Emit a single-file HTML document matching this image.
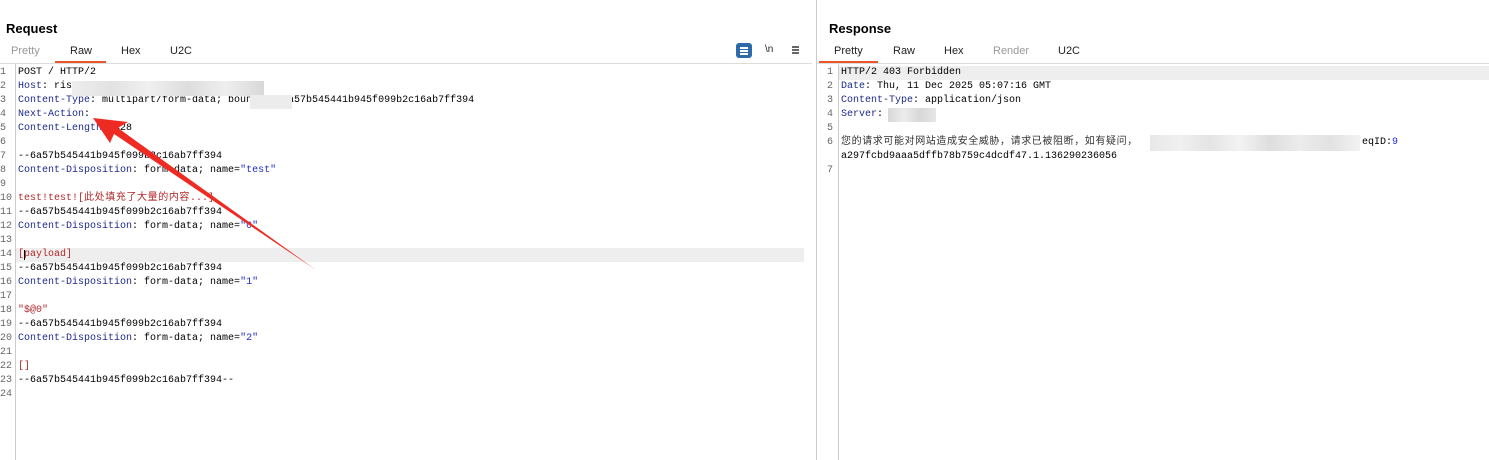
<!DOCTYPE html>
<html><head><meta charset="utf-8"><style>
*{margin:0;padding:0;box-sizing:border-box}
body{width:1489px;height:460px;background:#fff;position:relative;overflow:hidden;font-family:"Liberation Sans",sans-serif}
.title{position:absolute;top:21px;font-weight:bold;font-size:13px;color:#000}
.tab{position:absolute;top:45px;font-size:11px;color:#222}
.tab.dim{color:#999}
.ul{position:absolute;top:61px;height:2px;background:#e8562a}
.hr{position:absolute;top:63px;height:1px;background:#ddd}
.code{position:absolute;top:66px;font-family:"Liberation Mono","Noto Sans CJK SC",monospace;font-size:10px;line-height:14px;white-space:pre;color:#000}
.ln{position:absolute;top:66px;font-family:"Liberation Mono",monospace;font-size:10px;line-height:14px;color:#666;text-align:left;white-space:pre}
.k{color:#1e2a8c}.s{color:#1e2acc}.r{color:#b0282a}
.cj{letter-spacing:0.6px}
.blur{position:absolute;background:#e4e4e4}
</style></head><body>
<div class="title" style="left:6px">Request</div>
<div class="tab dim" style="left:11px">Pretty</div>
<div class="tab" style="left:70px">Raw</div>
<div class="tab" style="left:121px">Hex</div>
<div class="tab" style="left:170px">U2C</div>
<div class="ul" style="left:55px;width:51px"></div>
<div class="hr" style="left:0;width:812px"></div>
<div style="position:absolute;left:736px;top:43px;width:16px;height:15px;background:#2e6aa8;border-radius:3px"></div>
<div style="position:absolute;left:740px;top:47px;width:8px;height:1.5px;background:#fff;box-shadow:0 3px 0 #fff,0 6px 0 #fff"></div>
<div style="position:absolute;left:765px;top:44px;font-size:10px;color:#222;font-family:'Liberation Sans'">\n</div>
<div style="position:absolute;left:792px;top:46px;width:7px;height:1.5px;background:#666;box-shadow:0 3px 0 #666,0 6px 0 #666"></div>
<div style="position:absolute;left:816px;top:0;width:1px;height:460px;background:#ccc"></div>
<div style="position:absolute;left:15px;top:64px;width:1px;height:396px;background:#ccc"></div>
<div style="position:absolute;left:16px;top:248px;width:788px;height:14px;background:#eee"></div>
<div class="ln">1
2
3
4
5
6
7
8
9
10
11
12
13
14
15
16
17
18
19
20
21
22
23
24</div>
<div class="code" style="left:18px">POST / HTTP/2
<span class="k">Host</span>: ris
<span class="k">Content-Type</span>: multipart/form-data; boundary=6a57b545441b945f099b2c16ab7ff394
<span class="k">Next-Action</span>:
<span class="k">Content-Length</span>: 428

--6a57b545441b945f099b2c16ab7ff394
<span class="k">Content-Disposition</span>: form-data; name=<span class="s">"test"</span>

<span class="r">test!test![<span class="cj">此处填充了大量的内容</span>...]</span>
--6a57b545441b945f099b2c16ab7ff394
<span class="k">Content-Disposition</span>: form-data; name=<span class="s">"0"</span>

<span class="r">[payload]</span>
--6a57b545441b945f099b2c16ab7ff394
<span class="k">Content-Disposition</span>: form-data; name=<span class="s">"1"</span>

<span class="r">"$@0"</span>
--6a57b545441b945f099b2c16ab7ff394
<span class="k">Content-Disposition</span>: form-data; name=<span class="s">"2"</span>

<span class="r">[]</span>
--6a57b545441b945f099b2c16ab7ff394--
</div>
<div class="blur" style="left:72px;top:81px;width:192px;height:15px;background:linear-gradient(90deg,#eee,#e2e2e2,#f0f0f0,#ddd,#eee,#d8d8d8)"></div>
<div class="blur" style="left:250px;top:95px;width:42px;height:14px;background:#ececec"></div>
<div style="position:absolute;left:24px;top:250px;width:1px;height:10px;background:#000"></div>

<div class="title" style="left:829px">Response</div>
<div class="tab" style="left:834px">Pretty</div>
<div class="tab" style="left:893px">Raw</div>
<div class="tab" style="left:944px">Hex</div>
<div class="tab dim" style="left:993px">Render</div>
<div class="tab" style="left:1058px">U2C</div>
<div class="ul" style="left:819px;width:59px"></div>
<div class="hr" style="left:817px;width:672px"></div>
<div style="position:absolute;left:838px;top:64px;width:1px;height:396px;background:#ccc"></div>
<div style="position:absolute;left:839px;top:66px;width:650px;height:14px;background:#eee"></div>
<div class="ln" style="left:827px">1
2
3
4
5
6

7</div>
<div class="code" style="left:841px">HTTP/2 403 Forbidden
<span class="k">Date</span>: Thu, 11 Dec 2025 05:07:16 GMT
<span class="k">Content-Type</span>: application/json
<span class="k">Server</span>: 

<span style="color:#333" class="cj">您的请求可能对网站造成安全威胁，请求已被阻断，如有疑问，</span>
a297fcbd9aaa5dffb78b759c4dcdf47.1.136290236056</div>
<div class="code" style="left:1362px;top:136px">eqID:<span class="s">9</span></div>
<div class="blur" style="left:888px;top:108px;width:48px;height:14px;background:linear-gradient(90deg,#d8d8d8,#ececec,#d8d8d8,#e6e6e6)"></div>
<div class="blur" style="left:1150px;top:135px;width:210px;height:16px;background:linear-gradient(90deg,#e8e8e8,#f0f0f0,#e4e4e4,#f3f3f3,#dedede,#ececec,#e2e2e2,#f2f2f2)"></div>

<svg style="position:absolute;left:0;top:0" width="1489" height="460">
<polygon points="93,118 128,122 118,128 316,270 114,134 110,143" fill="#ee2b22"/>
</svg>
</body></html>
